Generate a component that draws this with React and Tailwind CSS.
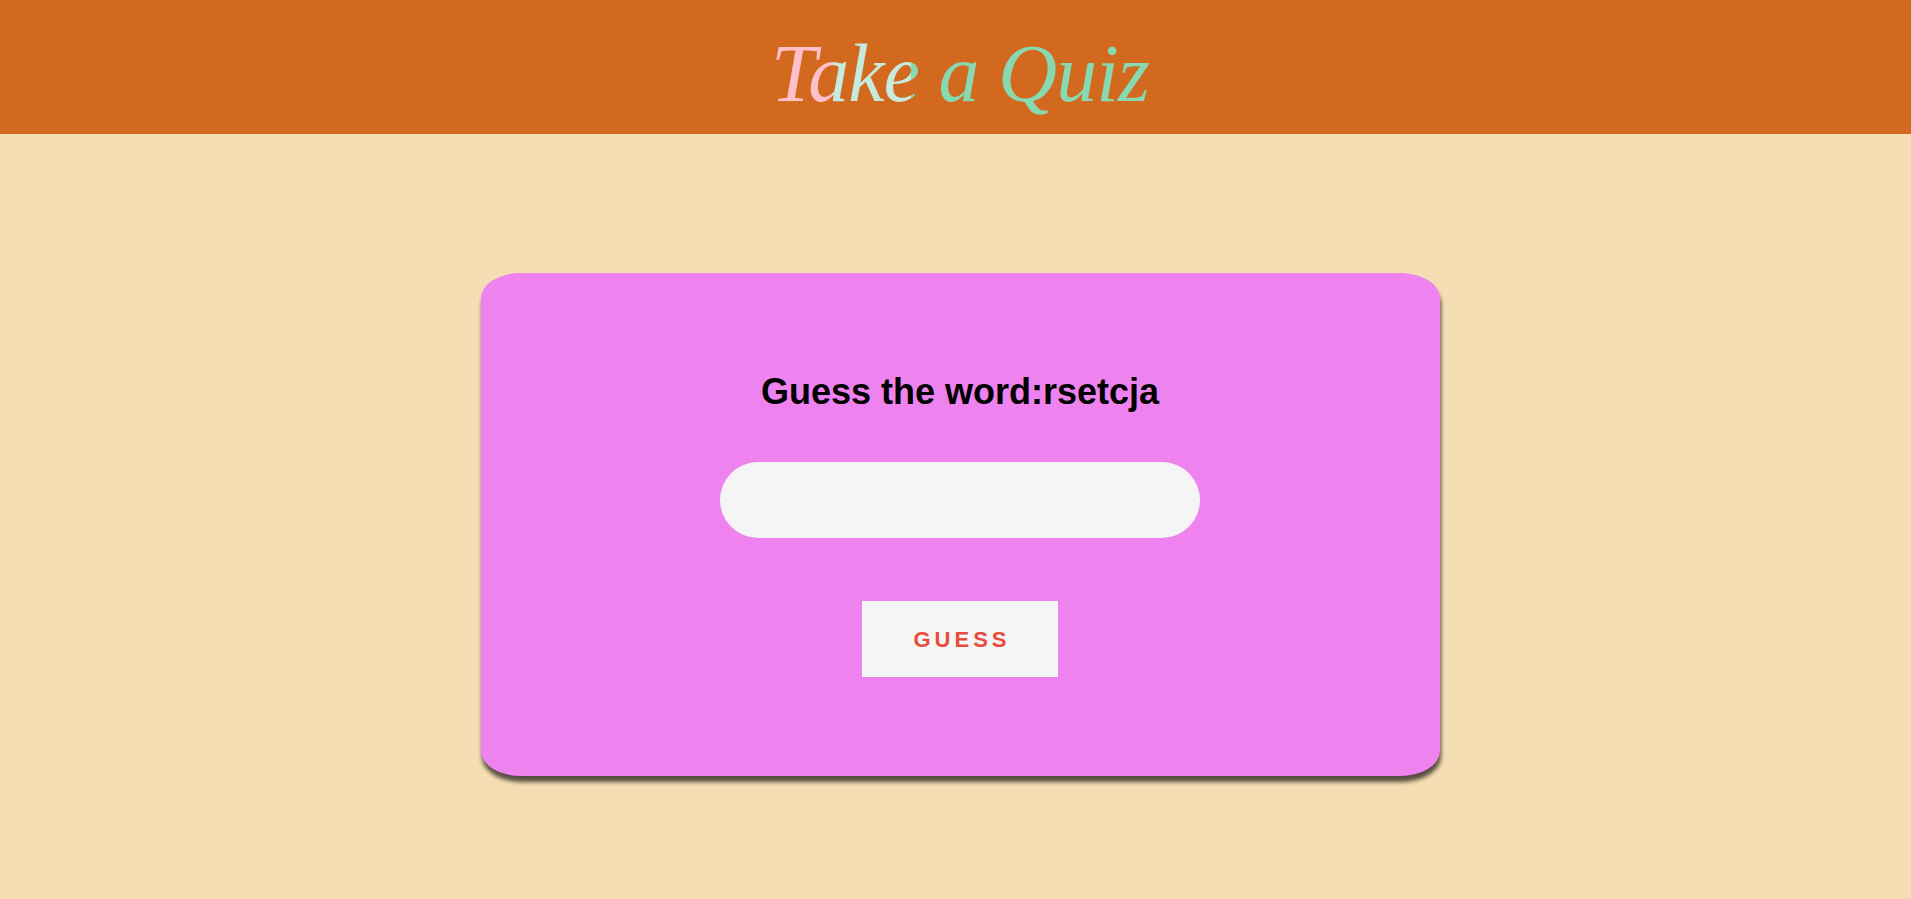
import React, { useState } from "react";

const App = () => {
  const [guess, setGuess] = useState("");

  return (
    <div className="min-h-screen bg-[#f5deb3]">
      {/* header */}
      <header className="h-[134px] bg-[#d2691e] flex items-center justify-center pl-[9px] pt-[14px]">
        <h1
          className="inline-block text-[82px] leading-none italic tracking-[-1px] text-transparent bg-clip-text bg-[linear-gradient(to_right,#ffc0cb_0px,#ffc0cb_62px,#c6eadb_62px,#c6eadb_140px,#88d8b0_140px,#88d8b0_100%)]"
          style={{ fontFamily: '"Liberation Serif", "DejaVu Serif", serif' }}
        >
          Take a Quiz
        </h1>
      </header>

      {/* quiz card */}
      <main className="flex justify-center pl-[9px] pt-[139px]">
        <div className="w-[959px] bg-[#ee82ee] rounded-[40px/25px] shadow-[1px_6px_4px_rgba(0,0,0,0.65)] flex flex-col items-center pt-[99px] pb-[99px]">
          <h2
            className="text-[36px] leading-[40px] font-bold text-black"
            style={{ fontFamily: '"Liberation Sans", Arial, sans-serif' }}
          >
            Guess the word:rsetcja
          </h2>

          <input
            type="text"
            value={guess}
            onChange={(e) => setGuess(e.target.value)}
            className="mt-[50px] w-[480px] h-[76px] rounded-full bg-[#f5f5f5] px-8 text-2xl outline-none"
          />

          <button
            className="mt-[63px] w-[196px] h-[76px] bg-[#f5f5f5] text-[#e74c3c] text-[22px] font-bold tracking-[4px] pl-[4px]"
            style={{ fontFamily: '"Liberation Sans", Arial, sans-serif' }}
          >
            GUESS
          </button>
        </div>
      </main>
    </div>
  );
};

export default App;
